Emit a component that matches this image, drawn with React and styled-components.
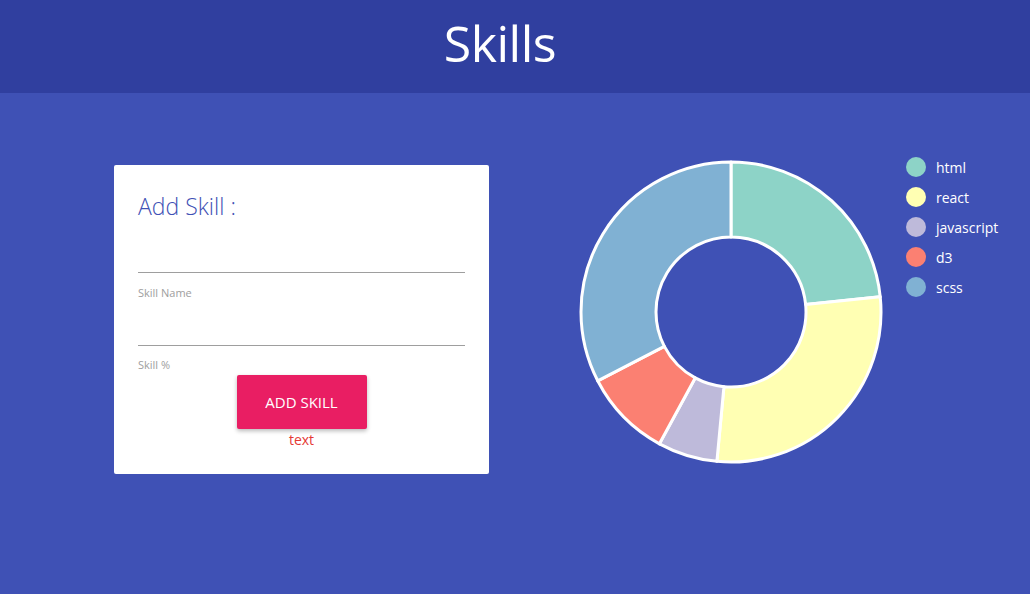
import React from "react";
import styled, { createGlobalStyle } from "styled-components";

const GlobalStyle = createGlobalStyle`
  html, body {
    margin: 0;
    padding: 0;
    background: #3f51b5;
    font-family: "Open Sans", "Noto Sans", sans-serif;
  }
  * { box-sizing: border-box; }
`;

const Page = styled.div`
  width: 1030px;
  height: 594px;
  background: #3f51b5;
  overflow: hidden;
`;

const Header = styled.header`
  height: 93px;
  background: #303f9f;
  display: flex;
  align-items: center;
  justify-content: center;
  padding-right: 30px;
`;

const Title = styled.h1`
  margin: 0 0 8px 0;
  font-size: 50px;
  font-weight: 400;
  color: #fff;
  letter-spacing: -0.5px;
`;

const Main = styled.main`
  display: flex;
  align-items: flex-start;
  padding: 64px 0 0 114px;
`;

const Card = styled.section`
  width: 375px;
  height: 309px;
  margin-top: 8px;
  background: #fff;
  border-radius: 2px;
  padding: 26px 24px 0 24px;
  display: flex;
  flex-direction: column;
`;

const CardTitle = styled.h2`
  margin: 0;
  font-size: 23px;
  line-height: 30px;
  font-weight: 300;
  color: #3f51b5;
`;

const Input = styled.input`
  display: block;
  width: 100%;
  height: 31px;
  margin-top: ${(p) => p.$top}px;
  border: none;
  border-bottom: 1px solid #9e9e9e;
  outline: none;
  background: transparent;
  font: inherit;
`;

const Label = styled.label`
  display: block;
  margin-top: ${(p) => p.$top}px;
  font-size: 11px;
  line-height: 14px;
  color: #9e9e9e;
`;

const Actions = styled.div`
  display: flex;
  flex-direction: column;
  align-items: center;
  margin-top: 3px;
`;

const Button = styled.button`
  width: 130px;
  height: 54px;
  border: none;
  border-radius: 2px;
  background: #e91e63;
  color: #fff;
  font-family: inherit;
  font-size: 15px;
  text-transform: uppercase;
  box-shadow: 0 2px 4px rgba(0, 0, 0, 0.28);
  cursor: pointer;
`;

const Note = styled.span`
  margin-top: 1px;
  font-size: 14px;
  line-height: 20px;
  color: #e53935;
`;

const ChartWrap = styled.div`
  display: flex;
  align-items: flex-start;
  margin-left: 87px;
`;

const Legend = styled.ul`
  list-style: none;
  margin: 0 0 0 20px;
  padding: 0;
  display: flex;
  flex-direction: column;
  gap: 10px;
`;

const LegendItem = styled.li`
  display: flex;
  align-items: center;
  gap: 10px;
  height: 20px;
  font-size: 14px;
  color: #fff;
`;

const Swatch = styled.span`
  width: 20px;
  height: 20px;
  border-radius: 50%;
  background: ${(p) => p.$color};
`;

const skills = [
  { name: "html", deg: 84.2, color: "#8dd3c7" },
  { name: "react", deg: 101.2, color: "#ffffb3" },
  { name: "javascript", deg: 23.1, color: "#bebada" },
  { name: "d3", deg: 34.2, color: "#fb8072" },
  { name: "scss", deg: 117.3, color: "#80b1d3" },
];

function pt(cx, cy, r, deg) {
  const a = ((deg - 90) * Math.PI) / 180;
  return [cx + r * Math.cos(a), cy + r * Math.sin(a)];
}

function arc(cx, cy, r0, r1, a0, a1) {
  const large = a1 - a0 > 180 ? 1 : 0;
  const [x0, y0] = pt(cx, cy, r1, a0);
  const [x1, y1] = pt(cx, cy, r1, a1);
  const [x2, y2] = pt(cx, cy, r0, a1);
  const [x3, y3] = pt(cx, cy, r0, a0);
  return `M${x0},${y0} A${r1},${r1} 0 ${large} 1 ${x1},${y1} L${x2},${y2} A${r0},${r0} 0 ${large} 0 ${x3},${y3} Z`;
}

function Donut() {
  let start = 0;
  return (
    <svg width="310" height="310" viewBox="0 0 310 310">
      {skills.map((s) => {
        const d = arc(155, 155, 75, 150, start, start + s.deg);
        start += s.deg;
        return (
          <path key={s.name} d={d} fill={s.color} stroke="#fff" strokeWidth="3" strokeLinejoin="round" />
        );
      })}
    </svg>
  );
}

export default function App() {
  return (
    <Page>
      <GlobalStyle />
      <Header>
        <Title>Skills</Title>
      </Header>
      <Main>
        <Card>
          <CardTitle>Add Skill :</CardTitle>
          <Input $top={21} />
          <Label $top={13}>Skill Name</Label>
          <Input $top={15} />
          <Label $top={12}>Skill %</Label>
          <Actions>
            <Button>Add Skill</Button>
            <Note>text</Note>
          </Actions>
        </Card>
        <ChartWrap>
          <Donut />
          <Legend>
            {skills.map((s) => (
              <LegendItem key={s.name}>
                <Swatch $color={s.color} />
                {s.name}
              </LegendItem>
            ))}
          </Legend>
        </ChartWrap>
      </Main>
    </Page>
  );
}
